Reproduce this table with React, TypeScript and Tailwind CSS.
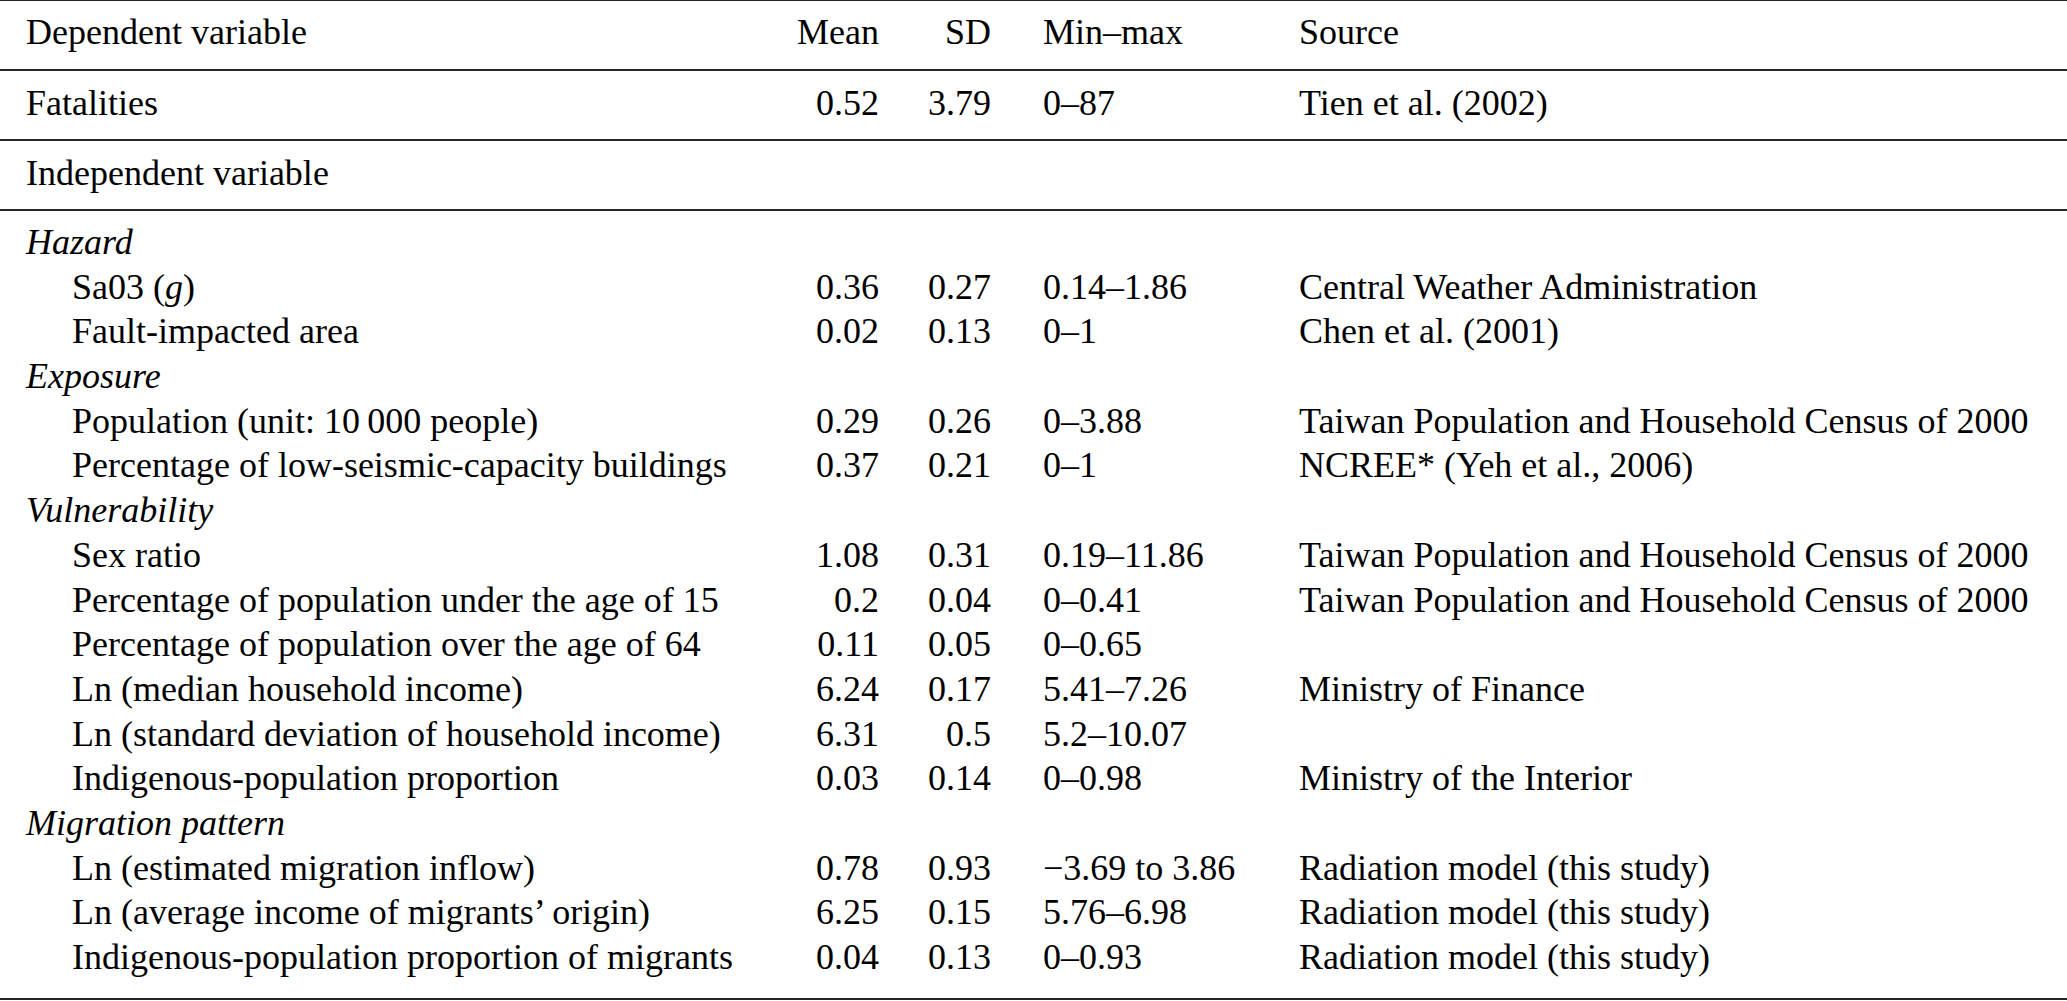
const NUM_COLS = "grid grid-cols-[760px_119px_112px_308px_1fr]";

type Row =
  | { kind: "group"; label: string }
  | {
      kind: "item";
      label: React.ReactNode;
      mean: string;
      sd: string;
      range: string;
      source?: string;
    };

const TAIWAN = "Taiwan Population and Household Census of 2000";
const RADIATION = "Radiation model (this study)";

const ROWS: Row[] = [
  { kind: "group", label: "Hazard" },
  {
    kind: "item",
    label: (
      <>
        Sa03 (<i>g</i>)
      </>
    ),
    mean: "0.36",
    sd: "0.27",
    range: "0.14–1.86",
    source: "Central Weather Administration",
  },
  {
    kind: "item",
    label: "Fault-impacted area",
    mean: "0.02",
    sd: "0.13",
    range: "0–1",
    source: "Chen et al. (2001)",
  },
  { kind: "group", label: "Exposure" },
  {
    kind: "item",
    label: "Population (unit: 10\u2009000 people)",
    mean: "0.29",
    sd: "0.26",
    range: "0–3.88",
    source: TAIWAN,
  },
  {
    kind: "item",
    label: "Percentage of low-seismic-capacity buildings",
    mean: "0.37",
    sd: "0.21",
    range: "0–1",
    source: "NCREE* (Yeh et al., 2006)",
  },
  { kind: "group", label: "Vulnerability" },
  { kind: "item", label: "Sex ratio", mean: "1.08", sd: "0.31", range: "0.19–11.86", source: TAIWAN },
  {
    kind: "item",
    label: "Percentage of population under the age of 15",
    mean: "0.2",
    sd: "0.04",
    range: "0–0.41",
    source: TAIWAN,
  },
  {
    kind: "item",
    label: "Percentage of population over the age of 64",
    mean: "0.11",
    sd: "0.05",
    range: "0–0.65",
  },
  {
    kind: "item",
    label: "Ln (median household income)",
    mean: "6.24",
    sd: "0.17",
    range: "5.41–7.26",
    source: "Ministry of Finance",
  },
  {
    kind: "item",
    label: "Ln (standard deviation of household income)",
    mean: "6.31",
    sd: "0.5",
    range: "5.2–10.07",
  },
  {
    kind: "item",
    label: "Indigenous-population proportion",
    mean: "0.03",
    sd: "0.14",
    range: "0–0.98",
    source: "Ministry of the Interior",
  },
  { kind: "group", label: "Migration pattern" },
  {
    kind: "item",
    label: "Ln (estimated migration inflow)",
    mean: "0.78",
    sd: "0.93",
    range: "\u22123.69 to 3.86",
    source: RADIATION,
  },
  {
    kind: "item",
    label: "Ln (average income of migrants’ origin)",
    mean: "6.25",
    sd: "0.15",
    range: "5.76–6.98",
    source: RADIATION,
  },
  {
    kind: "item",
    label: "Indigenous-population proportion of migrants",
    mean: "0.04",
    sd: "0.13",
    range: "0–0.93",
    source: RADIATION,
  },
];

function Cells({
  label,
  mean,
  sd,
  range,
  source,
  indent,
}: {
  label: React.ReactNode;
  mean?: string;
  sd?: string;
  range?: string;
  source?: string;
  indent?: boolean;
}) {
  return (
    <div className={`${NUM_COLS} h-[44.7px] whitespace-nowrap`}>
      <div className={indent ? "pl-[72px]" : "pl-[26px]"}>{label}</div>
      <div className="text-right">{mean}</div>
      <div className="text-right">{sd}</div>
      <div className="pl-[52px]">{range}</div>
      <div>{source}</div>
    </div>
  );
}

export default function App() {
  return (
    <div className="w-[2067px] h-[1001px] bg-white text-black font-['Liberation_Serif',serif] text-[36px] leading-[44.7px]">
      <div className="border-t-[1.5px] border-[#262626]">
        {/* heights include the 2px rule underneath */}
        <div className="h-[70px] pt-[8.5px] border-b-2 border-[#262626]">
          <Cells label="Dependent variable" mean="Mean" sd="SD" range="Min–max" source="Source" />
        </div>
        <div className="h-[70px] pt-[9.5px] border-b-2 border-[#262626]">
          <Cells label="Fatalities" mean="0.52" sd="3.79" range="0–87" source="Tien et al. (2002)" />
        </div>
        <div className="h-[70px] pt-[9.5px] border-b-2 border-[#262626]">
          <Cells label="Independent variable" />
        </div>
        <div className="pt-[9px] pb-[18px] border-b-2 border-[#262626]">
          {ROWS.map((r, i) =>
            r.kind === "group" ? (
              <Cells key={i} label={<i>{r.label}</i>} />
            ) : (
              <Cells
                key={i}
                indent
                label={r.label}
                mean={r.mean}
                sd={r.sd}
                range={r.range}
                source={r.source}
              />
            ),
          )}
        </div>
      </div>
    </div>
  );
}
